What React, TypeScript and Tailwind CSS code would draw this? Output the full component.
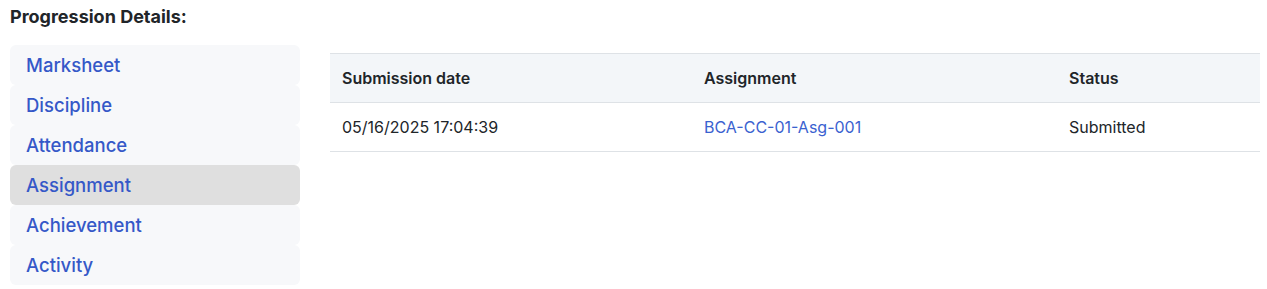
import React, { useState } from "react";
import type { FC } from "react";

const tabs = ["Marksheet", "Discipline", "Attendance", "Assignment", "Achievement", "Activity"];

const rows = [
  { date: "05/16/2025 17:04:39", assignment: "BCA-CC-01-Asg-001", status: "Submitted" },
];

const App: FC = () => {
  const [active, setActive] = useState("Assignment");

  return (
    <div className="pl-[10px] pr-[7px] pt-[4px] bg-white text-[#212529]" style={{ fontFamily: "Inter, 'Noto Sans', sans-serif" }}>
      <h2 className="text-[18px] font-bold leading-[26px] text-[#212529]">Progression Details:</h2>

      <div className="flex gap-[30px] mt-[15px]">
        {/* side tabs */}
        <div className="w-[290px] flex flex-col shrink-0">
          {tabs.map((t) => (
            <button
              key={t}
              type="button"
              onClick={() => setActive(t)}
              className={`h-[40px] pt-[2px] text-left px-4 rounded-md text-[18.5px] font-medium text-[#3558c8] ${
                active === t ? "bg-[#dfdfdf]" : "bg-[#f7f8fa]"
              }`}
            >
              {t}
            </button>
          ))}
        </div>

        {/* table */}
        <div className="flex-1 pt-[8px]">
          <table className="w-full text-[16px] border-collapse">
            <thead>
              <tr className="bg-[#f3f6f9] border-y border-[#dee2e6]">
                <th className="w-[362px] h-[49px] px-3 text-left font-semibold">Submission date</th>
                <th className="w-[365px] px-3 text-left font-semibold">Assignment</th>
                <th className="px-3 text-left font-semibold">Status</th>
              </tr>
            </thead>
            <tbody>
              {rows.map((r) => (
                <tr key={r.assignment} className="border-b border-[#dee2e6]">
                  <td className="h-[49px] px-3">{r.date}</td>
                  <td className="px-3">
                    <a href="#" className="text-[#3a62d0]">{r.assignment}</a>
                  </td>
                  <td className="px-3">{r.status}</td>
                </tr>
              ))}
            </tbody>
          </table>
        </div>
      </div>
    </div>
  );
};

export default App;
